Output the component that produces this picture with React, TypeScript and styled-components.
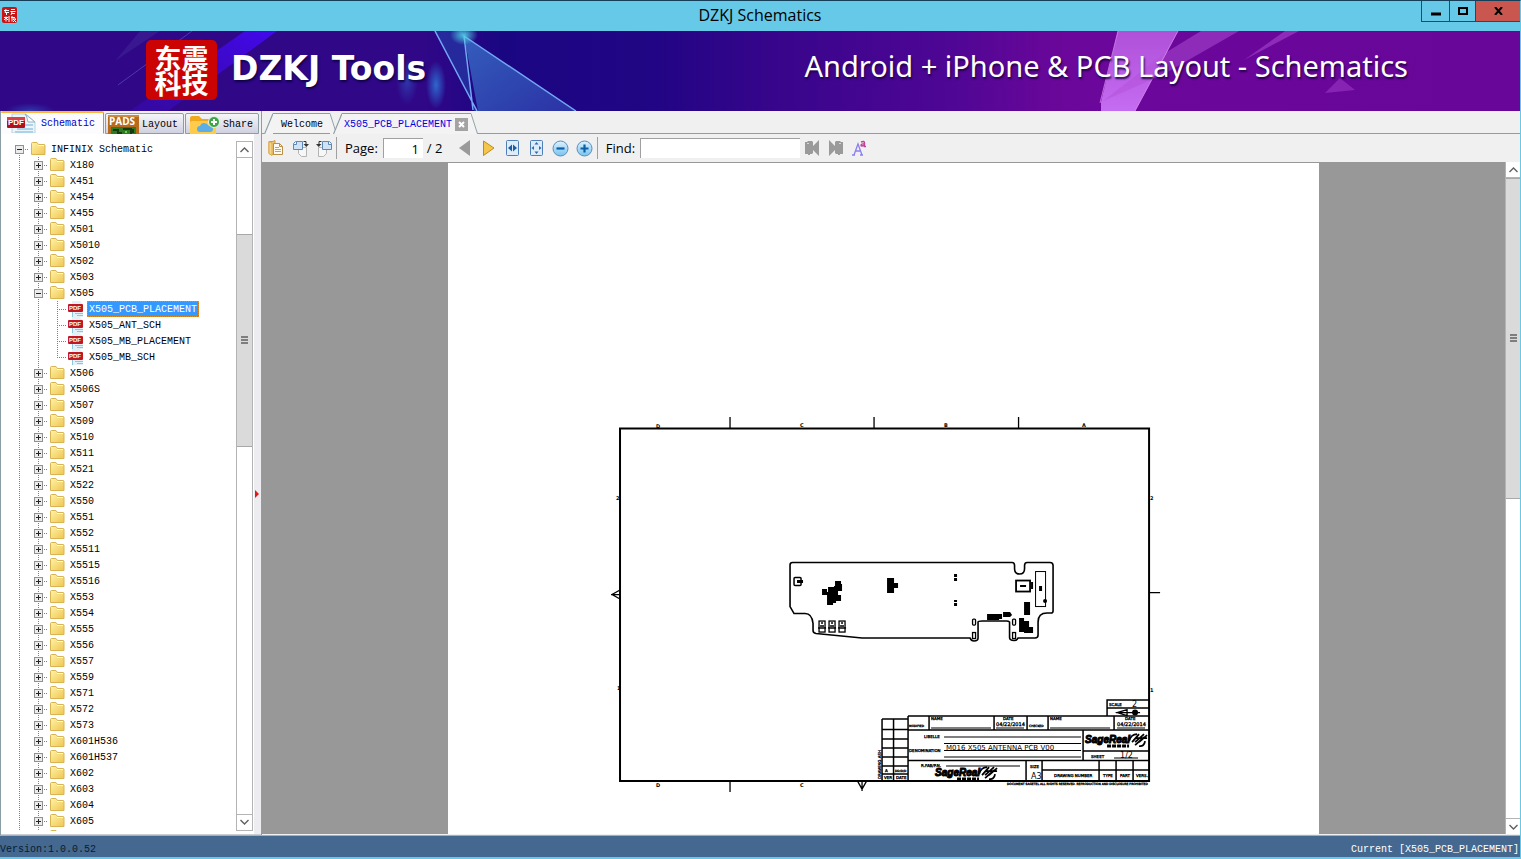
import React, { useState } from "react";
import styled, { createGlobalStyle, css } from "styled-components";

const mono = `"Liberation Mono", "Noto Sans CJK SC", monospace`;
const ui = `"Open Sans", "Noto Sans", sans-serif`;

const Global = createGlobalStyle`
  *, *::before, *::after { box-sizing: border-box; }
  html, body { margin: 0; padding: 0; }
  body { background: #66c9e8; font-family: ${mono}; font-size: 10px; color: #000; overflow: hidden; }
  button { font: inherit; color: inherit; background: none; border: 0; padding: 0; margin: 0; }
  svg { display: block; flex: none; }
`;

const Window = styled.div`
  display: flex;
  flex-direction: column;
  height: 100vh;
  border-top: 1px solid #153f58;
  border-right: 1px solid #66c9e8;
  border-bottom: 2px solid #66c9e8;
`;

/* ---------- title bar ---------- */
const TitleBar = styled.header`
  display: grid;
  grid-template-columns: 1fr auto 1fr;
  height: 30px;
  flex: none;
  background: #66c9e8;
`;
const TitleIcon = styled.div`
  padding: 6px 0 0 2px;
`;
const Title = styled.h1`
  margin: 0;
  font: 400 16px/28px ${ui};
`;
const WindowButtons = styled.div`
  display: flex;
  justify-content: flex-end;
  align-items: flex-start;
`;
const WindowButton = styled.button<{ $w: number; $close?: boolean }>`
  display: flex;
  align-items: center;
  justify-content: center;
  width: ${(p) => p.$w}px;
  height: 21px;
  border: solid #1d4d63;
  border-width: 0 0 1px 1px;
  background: ${(p) => (p.$close ? "#c9574f" : "transparent")};
`;

/* ---------- banner ---------- */
const Banner = styled.div`
  position: relative;
  display: flex;
  align-items: center;
  height: 80px;
  flex: none;
  padding: 0 112px 2px 146px;
  overflow: hidden;
  color: #fff;
  background: linear-gradient(90deg, #2f0787 0, #2f0787 28%, #1b0682 33%, #210584 43%, #3a058c 52%, #4d0694 62%, #6b079a 70%, #69069a 100%);
`;
const BannerArt = styled.svg`
  position: absolute;
  inset: 0;
  width: 100%;
  height: 100%;
`;
const Seal = styled.div`
  position: relative;
  display: flex;
  flex-direction: column;
  align-items: center;
  justify-content: center;
  width: 71px;
  height: 60px;
  margin-right: 14px;
  border-radius: 5px;
  background: #cb0303;
  font: 700 27px/25px "Noto Sans CJK SC", sans-serif;
`;
const Brand = styled.div`
  position: relative;
  padding-bottom: 2px;
  font: 700 33px/40px "DejaVu Sans", sans-serif;
  text-shadow: 1px 2px 2px #12044a;
  white-space: nowrap;
`;
const Slogan = styled.div`
  position: relative;
  margin-left: auto;
  padding-bottom: 8px;
  font: 400 29px/36px "Noto Sans", sans-serif;
  text-shadow: 1px 2px 2px #22044a;
  white-space: nowrap;
`;

/* ---------- body ---------- */
const Body = styled.div`
  display: flex;
  flex: 1;
  min-height: 0;
  background: #f0f0f0;
`;
const Sidebar = styled.aside`
  display: flex;
  flex-direction: column;
  flex: none;
  width: 262px;
  border-left: 1px solid #8b9da5;
  border-right: 1px solid #8b9da5;
`;
const SideTabs = styled.div`
  display: flex;
  align-items: flex-end;
  height: 23px;
  flex: none;
  gap: 1px;
`;
const SideTab = styled.button<{ $active?: boolean }>`
  display: flex;
  align-items: center;
  gap: 3px;
  height: 21px;
  padding: 1px 5px 0 2px;
  border: 1px solid #8b9da5;
  border-radius: 2px 2px 0 0;
  background: linear-gradient(#f6f6f9, #cfd1e0);
  ${(p) =>
    p.$active &&
    css`
      height: 23px;
      padding: 0 8px 0 6px;
      border-color: #ffb43c #8b9da5 #fcfcfe transparent;
      border-top-width: 2px;
      border-left-width: 0;
      background: #fcfcfe;
      color: #0000c8;
    `}
`;
const TreePane = styled.div`
  display: flex;
  flex: 1;
  min-height: 0;
  padding: 7px 0 3px;
  background: #fff;
  border-bottom: 1px solid #c9ced4;
`;
const TreeList = styled.ul`
  flex: 1;
  min-width: 0;
  margin: 0;
  padding: 0 0 0 9px;
  list-style: none;
  overflow: hidden;
`;
const Splitter = styled.div`
  display: flex;
  align-items: center;
  width: 8px;
  flex: none;
  margin: -7px 0 -3px;
  padding-top: 20px;
  background: linear-gradient(90deg, #fff 0 1px, #ececf1 1px);
`;
const TreeRow = styled.li`
  display: flex;
  align-items: center;
  height: 16px;
  white-space: nowrap;
`;
type GuideProps = { $v?: "full" | "top" | "bottom" | "none"; $h?: boolean };
const Guide = styled.span<GuideProps>`
  display: flex;
  align-items: center;
  justify-content: center;
  width: 19px;
  height: 16px;
  flex: none;
  background-repeat: no-repeat;
  background-image: repeating-linear-gradient(#808080 0 1px, transparent 1px 2px),
    repeating-linear-gradient(90deg, #808080 0 1px, transparent 1px 2px);
  background-position: 9px ${(p) => (p.$v === "bottom" ? 8 : 0)}px, 9px 8px;
  background-size: ${(p) => (p.$v === "none" ? "0 0" : p.$v === "full" ? "1px 16px" : "1px 8px")},
    ${(p) => (p.$h ? "10px 1px" : "0 0")};
`;
const Expander = styled.button`
  width: 9px;
  height: 9px;
`;
const NodeIcon = styled.span<{ $file?: boolean }>`
  margin-left: ${(p) => (p.$file ? 1 : 2)}px;
  margin-right: 3px;
`;
const NodeLabel = styled.button<{ $selected?: boolean }>`
  height: 16px;
  padding: 1px 1px 0;
  line-height: 13px;
  border: 1px ${(p) => (p.$selected ? "dotted #e58a1c" : "solid transparent")};
  background: ${(p) => (p.$selected ? "#3399ff" : "transparent")};
  color: ${(p) => (p.$selected ? "#fff" : "#000")};
`;

/* ---------- scroll bars ---------- */
const ScrollTrack = styled.div<{ $w: number }>`
  display: flex;
  flex-direction: column;
  width: ${(p) => p.$w}px;
  flex: none;
  border: solid #b4b4b4;
  border-width: ${(p) => (p.$w === 17 ? "1px" : "0 0 0 1px")};
  background: #fff;
`;
const ScrollArrow = styled.button`
  display: flex;
  align-items: center;
  justify-content: center;
  height: 16px;
  flex: none;
  background: #fff;
  border: solid #b4b4b4;
  border-width: 0 0 1px;
  &:last-child { border-width: 1px 0 0; }
`;
const ScrollGap = styled.div<{ $grow: number }>`
  flex: ${(p) => p.$grow} 0 0;
`;
const ScrollThumb = styled.div<{ $grow: number }>`
  display: flex;
  align-items: center;
  justify-content: center;
  flex: ${(p) => p.$grow} 0 0;
  background: #dadada;
  border: solid #a8a8a8;
  border-width: 1px 0;
`;

/* ---------- document area ---------- */
const Main = styled.main`
  display: flex;
  flex-direction: column;
  flex: 1;
  min-width: 0;
`;
const DocTabs = styled.div`
  display: flex;
  align-items: flex-end;
  height: 23px;
  flex: none;
  padding-left: 2px;
  background: linear-gradient(#8b9da5, #8b9da5) 0 100% / 100% 1px no-repeat #f0f0f0;
`;
const DocTab = styled.div<{ $active?: boolean }>`
  display: flex;
  height: 21px;
  ${(p) => p.$active && "margin-left: -4px;"}
`;
const DocTabBody = styled.div<{ $active?: boolean }>`
  display: flex;
  align-items: center;
  gap: 3px;
  padding: ${(p) => (p.$active ? "1px 3px 0 2px" : "1px 7px 0 8px")};
  border-top: 1px solid #8b9da5;
  border-bottom: 1px solid ${(p) => (p.$active ? "#f3f3f3" : "#8b9da5")};
  background: #f3f3f3;
  color: ${(p) => (p.$active ? "#0000e0" : "#000")};
`;
const CloseTab = styled.button`
  display: flex;
  align-items: center;
  justify-content: center;
  width: 13px;
  height: 13px;
  background: #a3a3a3;
`;
const Toolbar = styled.div`
  display: flex;
  align-items: center;
  height: 28px;
  flex: none;
  padding: 0 0 0 2px;
  font: 400 13px/20px ${ui};
`;
const ToolButton = styled.button`
  display: flex;
  align-items: center;
  justify-content: center;
  width: 24px;
  height: 24px;
`;
const Divider = styled.span`
  width: 1px;
  height: 22px;
  margin: 0 8px 0 0;
  background: #a0a0a0;
`;
const Field = styled.label`
  display: flex;
  align-items: center;
  gap: 5px;
`;
const TextBox = styled.input<{ $w: number }>`
  width: ${(p) => p.$w}px;
  height: 20px;
  padding: 0 4px;
  border: solid #a0a0a0;
  border-width: 1px 0 0 1px;
  border-radius: 0;
  outline: 0;
  background: #fff;
  font: inherit;
  text-align: ${(p) => (p.$w < 100 ? "right" : "left")};
`;
const PageCount = styled.span`
  width: 26px;
  margin-left: 4px;
`;
const Viewer = styled.div`
  display: flex;
  flex: 1;
  min-height: 0;
  background: #989898;
  border-bottom: 1px solid #f0f0f0;
`;
const Canvas = styled.div`
  display: flex;
  justify-content: center;
  flex: 1;
  min-width: 0;
  padding-top: 1px;
  overflow: hidden;
`;
const Sheet = styled.div`
  width: 70%;
  min-width: 560px;
  overflow: hidden;
  background: #fff;
`;
const Drawing = styled.svg`
  width: 100%;
  height: auto;
  font-family: "DejaVu Sans", sans-serif;
`;

const StatusBar = styled.footer`
  display: flex;
  justify-content: space-between;
  height: 22px;
  flex: none;
  padding: 8px 1px 0 0;
  border-top: 1px solid #9fb0bf;
  background: #44688f;
  line-height: 12px;
`;
const Version = styled.span`
  color: #071c33;
`;
const Current = styled.span`
  color: #fff;
`;

/* ---------- icons ---------- */
const Folder = () => (
  <svg width="15" height="14" viewBox="0 0 15 14">
    <defs>
      <linearGradient id="fold" x1="0" y1="0" x2="1" y2="1">
        <stop offset="0" stopColor="#fff3a8" />
        <stop offset="1" stopColor="#f0c552" />
      </linearGradient>
    </defs>
    <path d="M.5 12.500V1.500q0-1 1-1h4.500l1.500 2H13q1 0 1 1v9z" fill="url(#fold)" stroke="#d9b552" />
    <path d="M7 3.500h6" stroke="#fffbe0" />
  </svg>
);
const PdfSmall = () => (
  <svg width="16" height="16" viewBox="0 0 16 16">
    <path d="M4 0h8l3 4v12H4z" fill="#e2f1f8" />
    <path d="M4.500 10v6M7 12.500h8M9 14.500h6" stroke="#8fc5dc" />
    <rect x="0" y="3" width="15" height="8" rx="1" fill="#c01722" />
    <text x="1" y="9" fontSize="6" fontWeight="700" fontFamily="Liberation Sans" fill="#fff">PDF</text>
  </svg>
);
const PdfTab = () => (
  <svg width="31" height="20" viewBox="0 0 31 20">
    <path d="M5 1h14l9 8v11H5z" fill="#edf5fa" stroke="#b9d2df" />
    <path d="M18 1l10 8h-7q-1-6-3-8z" fill="#fff" stroke="#8fb4c6" />
    <path d="M18 12h8M10 16h16M8 19h18" stroke="#a9d3e8" strokeWidth="2" />
    <rect x="0" y="4" width="18" height="11" rx="1" fill="#b3101c" />
    <path d="M0 5q0-1 1-1h16q1 0 1 1v3H0z" fill="#d8434a" />
    <text x="1" y="12" fontSize="8" fontWeight="700" fontFamily="Liberation Sans" fill="#fff">PDF</text>
  </svg>
);
const PadsIcon = () => (
  <svg width="31" height="19" viewBox="0 0 31 19">
    <rect width="31" height="19" fill="#b86a1d" />
    <path d="M0 0h31v2H0z" fill="#cf8b3d" />
    <rect x="3" y="12" width="25" height="7" fill="#2f7a20" />
    <path d="M5 15h5v4M15 14h8v5M11 18h3M25 14v4" stroke="#173b10" strokeWidth="2" fill="none" />
    <circle cx="18" cy="17" r="1" fill="#8fe06a" />
    <text x="1" y="10" fontSize="10" fontWeight="700" fontFamily="Open Sans" fill="#fff">PADS</text>
  </svg>
);
const ShareIcon = () => (
  <svg width="32" height="19" viewBox="0 0 32 19">
    <path d="M2 3q0-2 2-2h7l3 3h12q2 0 2 2v13H2z" fill="#f0a91e" />
    <path d="M2 8q0-2 2-2h22q2 0 2 2v11H2z" fill="#ffcb4b" />
    <path d="M12 17q-3 0-3-3t3-3q1-3 4-3t5 3q4 0 4 3t-3 3z" fill="#5caee8" />
    <circle cx="26" cy="7" r="5.500" fill="#3aa648" stroke="#e8f5e4" />
    <path d="M26 4v6M23 7h6" stroke="#fff" strokeWidth="2" />
  </svg>
);
const SealIcon = () => (
  <svg width="15" height="16" viewBox="0 0 15 16">
    <rect width="15" height="16" rx="2" fill="#c81414" />
    <path d="M2 3.500h5M4 2l-1 3.500h4M4.500 5v3M9 2.500h4M8.500 4.500h5M9 6.500h4M9 8l1-3M2 10.500h4M4 9.500v5M2 13l2-2 2 2M7 9v6M9 10.500h4M10 9v5.500M11 12h3l-3 3M11 12l3 3" stroke="#fff" fill="none" />
  </svg>
);
const Chevron = ({ up }: { up?: boolean }) => (
  <svg width="9" height="6" viewBox="0 0 9 6">
    <path d={up ? "M.5 5l4-4 4 4" : "M.5 1l4 4 4-4"} fill="none" stroke="#606060" strokeWidth="1.400" />
  </svg>
);
const Grip = () => (
  <svg width="7" height="8" viewBox="0 0 7 8">
    <path d="M0 1h7M0 4h7M0 7h7" stroke="#606060" strokeWidth="1.500" />
  </svg>
);
const OpenIcon = () => (
  <svg width="16" height="16" viewBox="0 0 16 16">
    <path d="M1 1.500h4l2-1v14H3l-2-1z" fill="#f0c777" stroke="#d09b3c" />
    <path d="M5.500 3.500h6l3 3v8h-9z" fill="#fffaf0" stroke="#b98f45" />
    <path d="M11.500 3.500v3h3" fill="none" stroke="#b98f45" />
    <path d="M7 7.500h4M7 9.500h6M7 11.500h6" stroke="#b9a37c" />
    <path d="M1 1.500l3 1.500v12.500l-3-2z" fill="#f6d68b" stroke="#dba94e" />
  </svg>
);
const RotateIcon = ({ left }: { left?: boolean }) => (
  <svg width="17" height="17" viewBox="0 0 17 17">
    <g transform={left ? "matrix(-1 0 0 1 17 0)" : undefined}>
      <path d="M6.500 7.500h8v9h-5l-3-3z" fill="#f7f7f7" stroke="#b4b4b4" />
      <path d="M3.500 1.500h7v8h-9v-6z" fill="#cfe2f6" stroke="#5f87b5" />
      <path d="M1.500 4.500h3v-3" fill="#fff" stroke="#5f87b5" />
      <path d="M11.500 1.500H14v3" fill="none" stroke="#333" />
      <path d="M11.500 4H17l-2.700 3z" fill="#333" />
    </g>
  </svg>
);
const Arrow = ({ next }: { next?: boolean }) => (
  <svg width="12" height="16" viewBox="0 0 12 16">
    {next ? <path d="M.5 1l10.500 7L.5 15.500z" fill="#f5c64a" stroke="#bd8a1e" /> : <path d="M11 0v16L0 8z" fill="#9a9a9a" />}
  </svg>
);
const FitIcon = ({ all }: { all?: boolean }) => (
  <svg width="13" height="16" viewBox="0 0 13 16">
    <rect x=".5" y=".5" width="12" height="15" rx="1" fill="#dcecfb" stroke="#4f7fb4" />
    {all ? (
      <path d="M6.500 2l2 2.500h-4zM6.500 14l2-2.500h-4zM1.500 8L4 6v4zM11.500 8L9 6v4z" fill="#2e6aa8" />
    ) : (
      <path d="M2 8l4-3.500v7zM11 8L7 4.500v7z" fill="#1e5c9e" />
    )}
  </svg>
);
const ZoomIcon = ({ plus }: { plus?: boolean }) => (
  <svg width="17" height="17" viewBox="0 0 17 17">
    <defs>
      <linearGradient id="glass" x1="0" y1="0" x2="0" y2="1">
        <stop offset="0" stopColor="#dff2ff" />
        <stop offset="1" stopColor="#76c3f0" />
      </linearGradient>
    </defs>
    <circle cx="8.500" cy="8.500" r="7.500" fill="url(#glass)" stroke="#5d8db8" />
    <path d={plus ? "M4.500 8.500h8M8.500 4.500v8" : "M4.500 8.500h8"} stroke="#0b5fa5" strokeWidth="2.200" />
  </svg>
);
const FindIcon = ({ next }: { next?: boolean }) => (
  <svg width="16" height="16" viewBox="0 0 16 16">
    <g transform={next ? "matrix(-1 0 0 1 16 0)" : undefined} fill="#9a9a9a">
      <path d="M1 2h2l1-1h4l1 1v4l6-6v16l-6-6v3l-1 1H6v1H4v-1H1z" />
      <path d="M3 3h2v1H3z" fill="#d8d8d8" />
    </g>
  </svg>
);
const CaseIcon = () => (
  <svg width="16" height="16" viewBox="0 0 16 16">
    <path d="M2 15L6 4l4 11M3 11h6M0 15h3M8 15h3" stroke="#8c7ff0" strokeWidth="1.300" fill="none" />
    <path d="M9 2q3.500-1.500 3.500 1V6.500H14M12.500 4Q9 3.500 9 5.200t3.500 0" stroke="#c0409c" strokeWidth="1.400" fill="none" />
  </svg>
);

/* ---------- scroll bar ---------- */
const ScrollBar = ({ w, parts }: { w: number; parts: [number, number, number] }) => (
  <ScrollTrack $w={w}>
    <ScrollArrow aria-label="Scroll up"><Chevron up /></ScrollArrow>
    <ScrollGap $grow={parts[0]} />
    <ScrollThumb $grow={parts[1]}><Grip /></ScrollThumb>
    <ScrollGap $grow={parts[2]} />
    <ScrollArrow aria-label="Scroll down"><Chevron /></ScrollArrow>
  </ScrollTrack>
);

/* ---------- tree ---------- */
const models = (
  "X180 X451 X454 X455 X501 X5010 X502 X503 X505 X506 X506S X507 X509 X510 X511 X521 X522 X550 X551 X552 " +
  "X5511 X5515 X5516 X553 X554 X555 X556 X557 X559 X571 X572 X573 X601H536 X601H537 X602 X603 X604 X605"
).split(" ");
const files: Record<string, string[]> = {
  X505: ["X505_PCB_PLACEMENT", "X505_ANT_SCH", "X505_MB_PLACEMENT", "X505_MB_SCH"],
};

const Toggle = ({ open, onClick }: { open: boolean; onClick?: () => void }) => (
  <Expander aria-label={open ? "Collapse" : "Expand"} onClick={onClick}>
    <svg width="9" height="9" viewBox="0 0 9 9">
      <rect x=".5" y=".5" width="8" height="8" fill="#ececec" stroke="#919191" />
      <path d={open ? "M2 4.500h5" : "M2 4.500h5M4.500 2v5"} stroke="#222" />
    </svg>
  </Expander>
);

function Tree() {
  const [open, setOpen] = useState<string[]>(["X505"]);
  const [selected, setSelected] = useState("X505_PCB_PLACEMENT");
  const flip = (m: string) => setOpen((o) => (o.includes(m) ? o.filter((x) => x !== m) : [...o, m]));
  return (
    <TreeList>
      <TreeRow>
        <Guide $v="bottom" $h><Toggle open /></Guide>
        <NodeIcon><Folder /></NodeIcon>
        <NodeLabel>INFINIX Schematic</NodeLabel>
      </TreeRow>
      {models.map((m) => (
        <React.Fragment key={m}>
          <TreeRow>
            <Guide $v="full" />
            <Guide $v="full" $h><Toggle open={open.includes(m)} onClick={() => flip(m)} /></Guide>
            <NodeIcon><Folder /></NodeIcon>
            <NodeLabel $selected={selected === m} onClick={() => setSelected(m)}>{m}</NodeLabel>
          </TreeRow>
          {open.includes(m) &&
            (files[m] ?? []).map((f, i, all) => (
              <TreeRow key={f}>
                <Guide $v="full" />
                <Guide $v="full" />
                <Guide $v={i === all.length - 1 ? "top" : "full"} $h />
                <NodeIcon $file><PdfSmall /></NodeIcon>
                <NodeLabel $selected={selected === f} onClick={() => setSelected(f)}>{f}</NodeLabel>
              </TreeRow>
            ))}
        </React.Fragment>
      ))}
      <TreeRow>
        <Guide $v="full" />
        <Guide $v="full" $h />
        <NodeIcon><Folder /></NodeIcon>
      </TreeRow>
    </TreeList>
  );
}

/* ---------- schematic sheet ---------- */
const SageReal = ({ x, y }: { x: number; y: number }) => (
  <g transform={`translate(${x} ${y})`}>
    <text x="0" y="10" fontSize="10" fontWeight="700" fontStyle="italic" fontFamily="Liberation Sans" stroke="#000" strokeWidth="1">SageReal</text>
    <path d="M22 13h22" stroke="#000" strokeWidth="3" strokeDasharray="4 1" />
    <path d="M44 8q2-7 8-7M47 9l7-8M50 9l9-8M54 9l8-7M51 5h11M50 12l9-8M54 13q5 1 6-5" stroke="#000" strokeWidth="1.800" fill="none" />
  </g>
);

const Schematic = () => (
  <Drawing viewBox="448 163 870 671" role="img" aria-label="X505 antenna PCB placement drawing">
    <g fill="none" stroke="#000" strokeWidth="2">
      <path d="M620 428.500h529V781H620z" />
      <path d="M790 565q0-2.500 2.500-2.500H1012q2.500 0 2.500 3v3q0 5.500 5 5.500t5-5.500v-3q0-3 2.500-3h23q3 0 3 3V611q0 2-2 2h-4q-9 0-9 9v13q0 3-3 3h-17q-1 2.500-4 2.500-4.500 0-4.500-3V622q-1-1-3-1H982q-4 0-4 1v16q0 3-4 3-3 0-4-3H862l-46-4.500q-3-.5-3-3v-7q-1-10-8-10h-11l-4-7z" strokeWidth="1.600" />
    </g>
    <path d="M730 417v11M874 417v11M1018.500 417v11M730 781v11M1149 592.500h11M620 590l-8 4.500 8 4.500M611 594.500h9M857.500 781l4.500 8 4.500-8M862 781v10" fill="none" stroke="#000" strokeWidth="1.300" />
    <g fontSize="5" fontWeight="700">
      <text x="656" y="428">D</text><text x="800" y="427">C</text><text x="944" y="427">B</text><text x="1082" y="427">A</text>
      <text x="656" y="787">D</text><text x="800" y="787">C</text>
      <text x="616" y="500">2</text><text x="1150" y="500">2</text><text x="617" y="690">1</text><text x="1150" y="692">1</text>
    </g>
    {/* components */}
    <g fill="none" stroke="#000">
      <rect x="794" y="577.500" width="7" height="8" rx="1" strokeWidth="1.500" />
      <rect x="1016" y="580.500" width="14" height="11" strokeWidth="1.800" />
      <rect x="1035.500" y="571.500" width="10" height="35" />
      {[819, 829, 839].map((x) => (
        <g key={x}>
          <rect x={x} y="621" width="6" height="11" strokeWidth="1.300" />
          <path d={`M${x - 1} 628h8M${x + 1} 626h4M${x + 2} 623h2`} strokeWidth="1.600" />
        </g>
      ))}
      <g strokeWidth="1.300">
        <rect x="972.500" y="619" width="3" height="6" rx="1" /><rect x="972.500" y="632.500" width="3" height="6" />
        <rect x="1012.500" y="619" width="3" height="6" rx="1" /><rect x="1012.500" y="632.500" width="3" height="6" />
      </g>
    </g>
    <path d="M797 580h6v3h-6zM835 581h6v3h1v7h-8v-5h1zM822 589h5v6h-5zM828 587h6v3h4v5h3v6h-5v2h-3v2h-6v-13h1zM887 578h7v5h4v5h-4v5h-7zM954 574h3v3h-3zM954 578h3v3h-3zM954 600h3v2h-3zM954 603h3v3h-3zM1020 585h6v2h-6zM1031 582h2v7h-2zM1039 586h3v5h-3zM1024 602h6v13h-6zM1003 612h7l2 3-2 2h-7zM987 614h15v5h-3v1h-12zM1019 618h5v3h5v6h4v6h-9v-1h-5z" />
    <circle cx="1045" cy="601" r="2" />
    {/* title block */}
    <path d="M1107 716v-16h42M908 716h241M882 719h26M882 719v62M893.500 719v62M882 729.500h26M882 739h26M882 748h26M882 757h26M882 766h26M882 774h26M908 716v65M908 730h241M929 716v14M994 716v14M1027 716v14M1048 716v14M1114 716v14M908 760.500h175M1083 730v30.500M1083 751h66M1083 760.500h66M1026 760.500V781M1042 760.500V781M1042 770h107M1099 760.500V781M1116 760.500V781M1133 760.500V781M1107 708h42" fill="none" stroke="#000" strokeWidth="1.500" />
    <path d="M931 728h60M996 728h28M1050 728h60M1117 728h28M944 737h137M944 743.500h137M944 750.500h137M944 757h137M946 766h74M1114 758h24" stroke="#000" />
    <path d="M1116 712.500h24M1117 712.500l10-3v6z" stroke="#000" strokeWidth="1.300" fill="none" />
    <circle cx="1135" cy="712.500" r="3" />
    <g fontSize="4" stroke="#000" strokeWidth=".3">
      <text x="931" y="720">NAME</text><text x="1003" y="720">DATE</text><text x="1050" y="720">NAME</text><text x="1125" y="720">DATE</text>
      <text x="909" y="727" fontSize="3">MODIFIED</text><text x="1029" y="727" fontSize="3">CHECKED</text>
      <text x="996" y="726" fontSize="5">04/22/2014</text><text x="1117" y="726" fontSize="5">04/22/2014</text>
      <text x="924" y="738">LIBELLE</text><text x="909" y="752">DENOMINATION</text><text x="921" y="767">R.FAB/P.N.</text>
      <text x="1109" y="706">SCALE</text><text x="1091" y="758">SHEET</text><text x="1030" y="768">SIZE</text>
      <text x="1054" y="777">DRAWING NUMBER</text><text x="1103" y="777">TYPE</text><text x="1120" y="777">PART</text><text x="1136" y="777">VERS.</text>
      <text x="885" y="772">A</text><text x="895" y="772" fontSize="3">DD/D/D</text><text x="884" y="779">VER</text><text x="896" y="779">DATE</text>
      <text x="1007" y="785" fontSize="3">DOCUMENT SAGETEL ALL RIGHTS RESERVED. REPRODUCTION AND DISCLOSURE PROHIBITED</text>
      <text transform="translate(881 779) rotate(-90)">DRAWING ASH</text>
    </g>
    <text x="946" y="750" fontSize="7">M016 X505 ANTENNA PCB V00</text>
    <text x="1132" y="707" fontSize="8">2</text>
    <text x="1120" y="758" fontSize="8">1/2</text>
    <text x="1031" y="779" fontSize="8">A3</text>
    <SageReal x={1085} y={733} />
    <SageReal x={935} y={766} />
  </Drawing>
);

const Slant = ({ flip }: { flip?: boolean }) => (
  <svg width={flip ? 7 : 9} height="21" viewBox="0 0 8 21" preserveAspectRatio="none">
    <path d={flip ? "M0 0L8 21H0z" : "M8 0L0 21H8z"} fill="#f3f3f3" />
    <path d={flip ? "M0 .5L7.500 21" : "M8 .5L.5 21"} stroke="#8b9da5" fill="none" />
  </svg>
);

export default function App() {
  const [page, setPage] = useState("1");
  const [query, setQuery] = useState("");
  return (
    <Window>
      <Global />
      <TitleBar>
        <TitleIcon><SealIcon /></TitleIcon>
        <Title>DZKJ Schematics</Title>
        <WindowButtons>
          <WindowButton $w={28} aria-label="Minimize"><svg width="10" height="9"><path d="M0 7h10" stroke="#000" strokeWidth="3" /></svg></WindowButton>
          <WindowButton $w={26} aria-label="Maximize"><svg width="10" height="8"><rect x="1" y="1" width="8" height="6" fill="none" stroke="#000" strokeWidth="2" /></svg></WindowButton>
          <WindowButton $w={45} $close aria-label="Close"><svg width="9" height="8"><path d="M1 0l7 8M8 0L1 8" stroke="#000" strokeWidth="2" /></svg></WindowButton>
        </WindowButtons>
      </TitleBar>

      <Banner>
        <BannerArt viewBox="0 0 1520 80" preserveAspectRatio="none" aria-hidden="true">
          <defs>
            <linearGradient id="beam" x1="0" y1="1" x2="1" y2="0">
              <stop offset="0" stopColor="#3a0bb8" stopOpacity=".5" />
              <stop offset="1" stopColor="#4408ee" />
            </linearGradient>
            <linearGradient id="shard" x1="0" y1="0" x2="1" y2="1">
              <stop offset="0" stopColor="#3a7bd0" />
              <stop offset="1" stopColor="#3040b0" />
            </linearGradient>
            <linearGradient id="pink" x1="0" y1="0" x2="0" y2="1">
              <stop offset="0" stopColor="#b050d8" />
              <stop offset="1" stopColor="#c46cf2" />
            </linearGradient>
            <radialGradient id="glow"><stop offset="0" stopColor="#2f7fe0" stopOpacity=".8" /><stop offset="1" stopColor="#2f7fe0" stopOpacity="0" /></radialGradient>
            <radialGradient id="spark"><stop offset="0" stopColor="#50d8e8" stopOpacity=".9" /><stop offset="1" stopColor="#50d8e8" stopOpacity="0" /></radialGradient>
          </defs>
          <path d="M245 0h32L168 80h-38z" fill="url(#beam)" />
          <path d="M192 0L118 54" stroke="#6a6ae0" strokeOpacity=".5" />
          <path d="M140 0h20L115 30z" fill="#4630a0" fillOpacity=".4" />
          <ellipse cx="436" cy="54" rx="10" ry="24" fill="url(#glow)" />
          <ellipse cx="407" cy="50" rx="11" ry="24" fill="url(#glow)" fillOpacity=".5" />
          <path d="M464 5l112 75h-98z" fill="url(#shard)" fillOpacity=".75" />
          <path d="M464 5l10 75h4L434 0h28z" fill="#234bb4" fillOpacity=".5" />
          <path d="M435 0l42 80M464 5l9 74M464 5l112 75" stroke="#72a8f4" strokeWidth="1.500" fill="none" />
          <ellipse cx="464" cy="4" rx="14" ry="10" fill="url(#spark)" />
          <ellipse cx="30" cy="80" rx="25" ry="8" fill="url(#glow)" fillOpacity=".5" />
          <path d="M1118 0h60l-43 80h-34v-9z" fill="url(#pink)" />
          <path d="M1201 0h38l-75 43-61 27 62-48z" fill="#b44fd8" fillOpacity=".5" />
          <path d="M1285 0h14l-55 29z" fill="#b44fd8" fillOpacity=".5" />
          <path d="M1340 47l15 12-30 3z" fill="#b44fd8" fillOpacity=".4" />
          <path d="M1118 0l-18 72M1178 0l-43 80" stroke="#e49af5" strokeOpacity=".7" fill="none" />
        </BannerArt>
        <Seal><div>东震</div><div>科技</div></Seal>
        <Brand>DZKJ Tools</Brand>
        <Slogan>Android + iPhone &amp; PCB Layout - Schematics</Slogan>
      </Banner>

      <Body>
        <Sidebar>
          <SideTabs>
            <SideTab $active><PdfTab />Schematic</SideTab>
            <SideTab><PadsIcon />Layout</SideTab>
            <SideTab><ShareIcon />Share</SideTab>
          </SideTabs>
          <TreePane>
            <Tree />
            <ScrollBar w={17} parts={[76, 213, 369]} />
            <Splitter><svg width="7" height="8"><path d="M2 0l4 4-4 4z" fill="#e01818" /></svg></Splitter>
          </TreePane>
        </Sidebar>

        <Main>
          <DocTabs>
            <DocTab>
              <Slant />
              <DocTabBody><button>Welcome</button></DocTabBody>
              <Slant flip />
            </DocTab>
            <DocTab $active>
              <Slant />
              <DocTabBody $active>
                <button>X505_PCB_PLACEMENT</button>
                <CloseTab aria-label="Close tab"><svg width="7" height="7"><path d="M1 1l5 5M6 1L1 6" stroke="#fff" strokeWidth="2" /></svg></CloseTab>
              </DocTabBody>
              <Slant flip />
            </DocTab>
          </DocTabs>
          <Toolbar>
            <ToolButton aria-label="Open"><OpenIcon /></ToolButton>
            <ToolButton aria-label="Rotate right"><RotateIcon /></ToolButton>
            <ToolButton aria-label="Rotate left"><RotateIcon left /></ToolButton>
            <Divider />
            <Field>Page: <TextBox $w={40} value={page} onChange={(e) => setPage(e.target.value)} /></Field>
            <PageCount>/ 2</PageCount>
            <ToolButton aria-label="Previous page"><Arrow /></ToolButton>
            <ToolButton aria-label="Next page"><Arrow next /></ToolButton>
            <ToolButton aria-label="Fit width"><FitIcon /></ToolButton>
            <ToolButton aria-label="Fit page"><FitIcon all /></ToolButton>
            <ToolButton aria-label="Zoom out"><ZoomIcon /></ToolButton>
            <ToolButton aria-label="Zoom in"><ZoomIcon plus /></ToolButton>
            <Divider />
            <Field>Find: <TextBox $w={160} value={query} onChange={(e) => setQuery(e.target.value)} /></Field>
            <ToolButton aria-label="Find previous"><FindIcon /></ToolButton>
            <ToolButton aria-label="Find next"><FindIcon next /></ToolButton>
            <ToolButton aria-label="Match case"><CaseIcon /></ToolButton>
          </Toolbar>
          <Viewer>
            <Canvas><Sheet><Schematic /></Sheet></Canvas>
            <ScrollBar w={15} parts={[0, 321, 322]} />
          </Viewer>
        </Main>
      </Body>

      <StatusBar>
        <Version>Version:1.0.0.52</Version>
        <Current>Current [X505_PCB_PLACEMENT]</Current>
      </StatusBar>
    </Window>
  );
}
